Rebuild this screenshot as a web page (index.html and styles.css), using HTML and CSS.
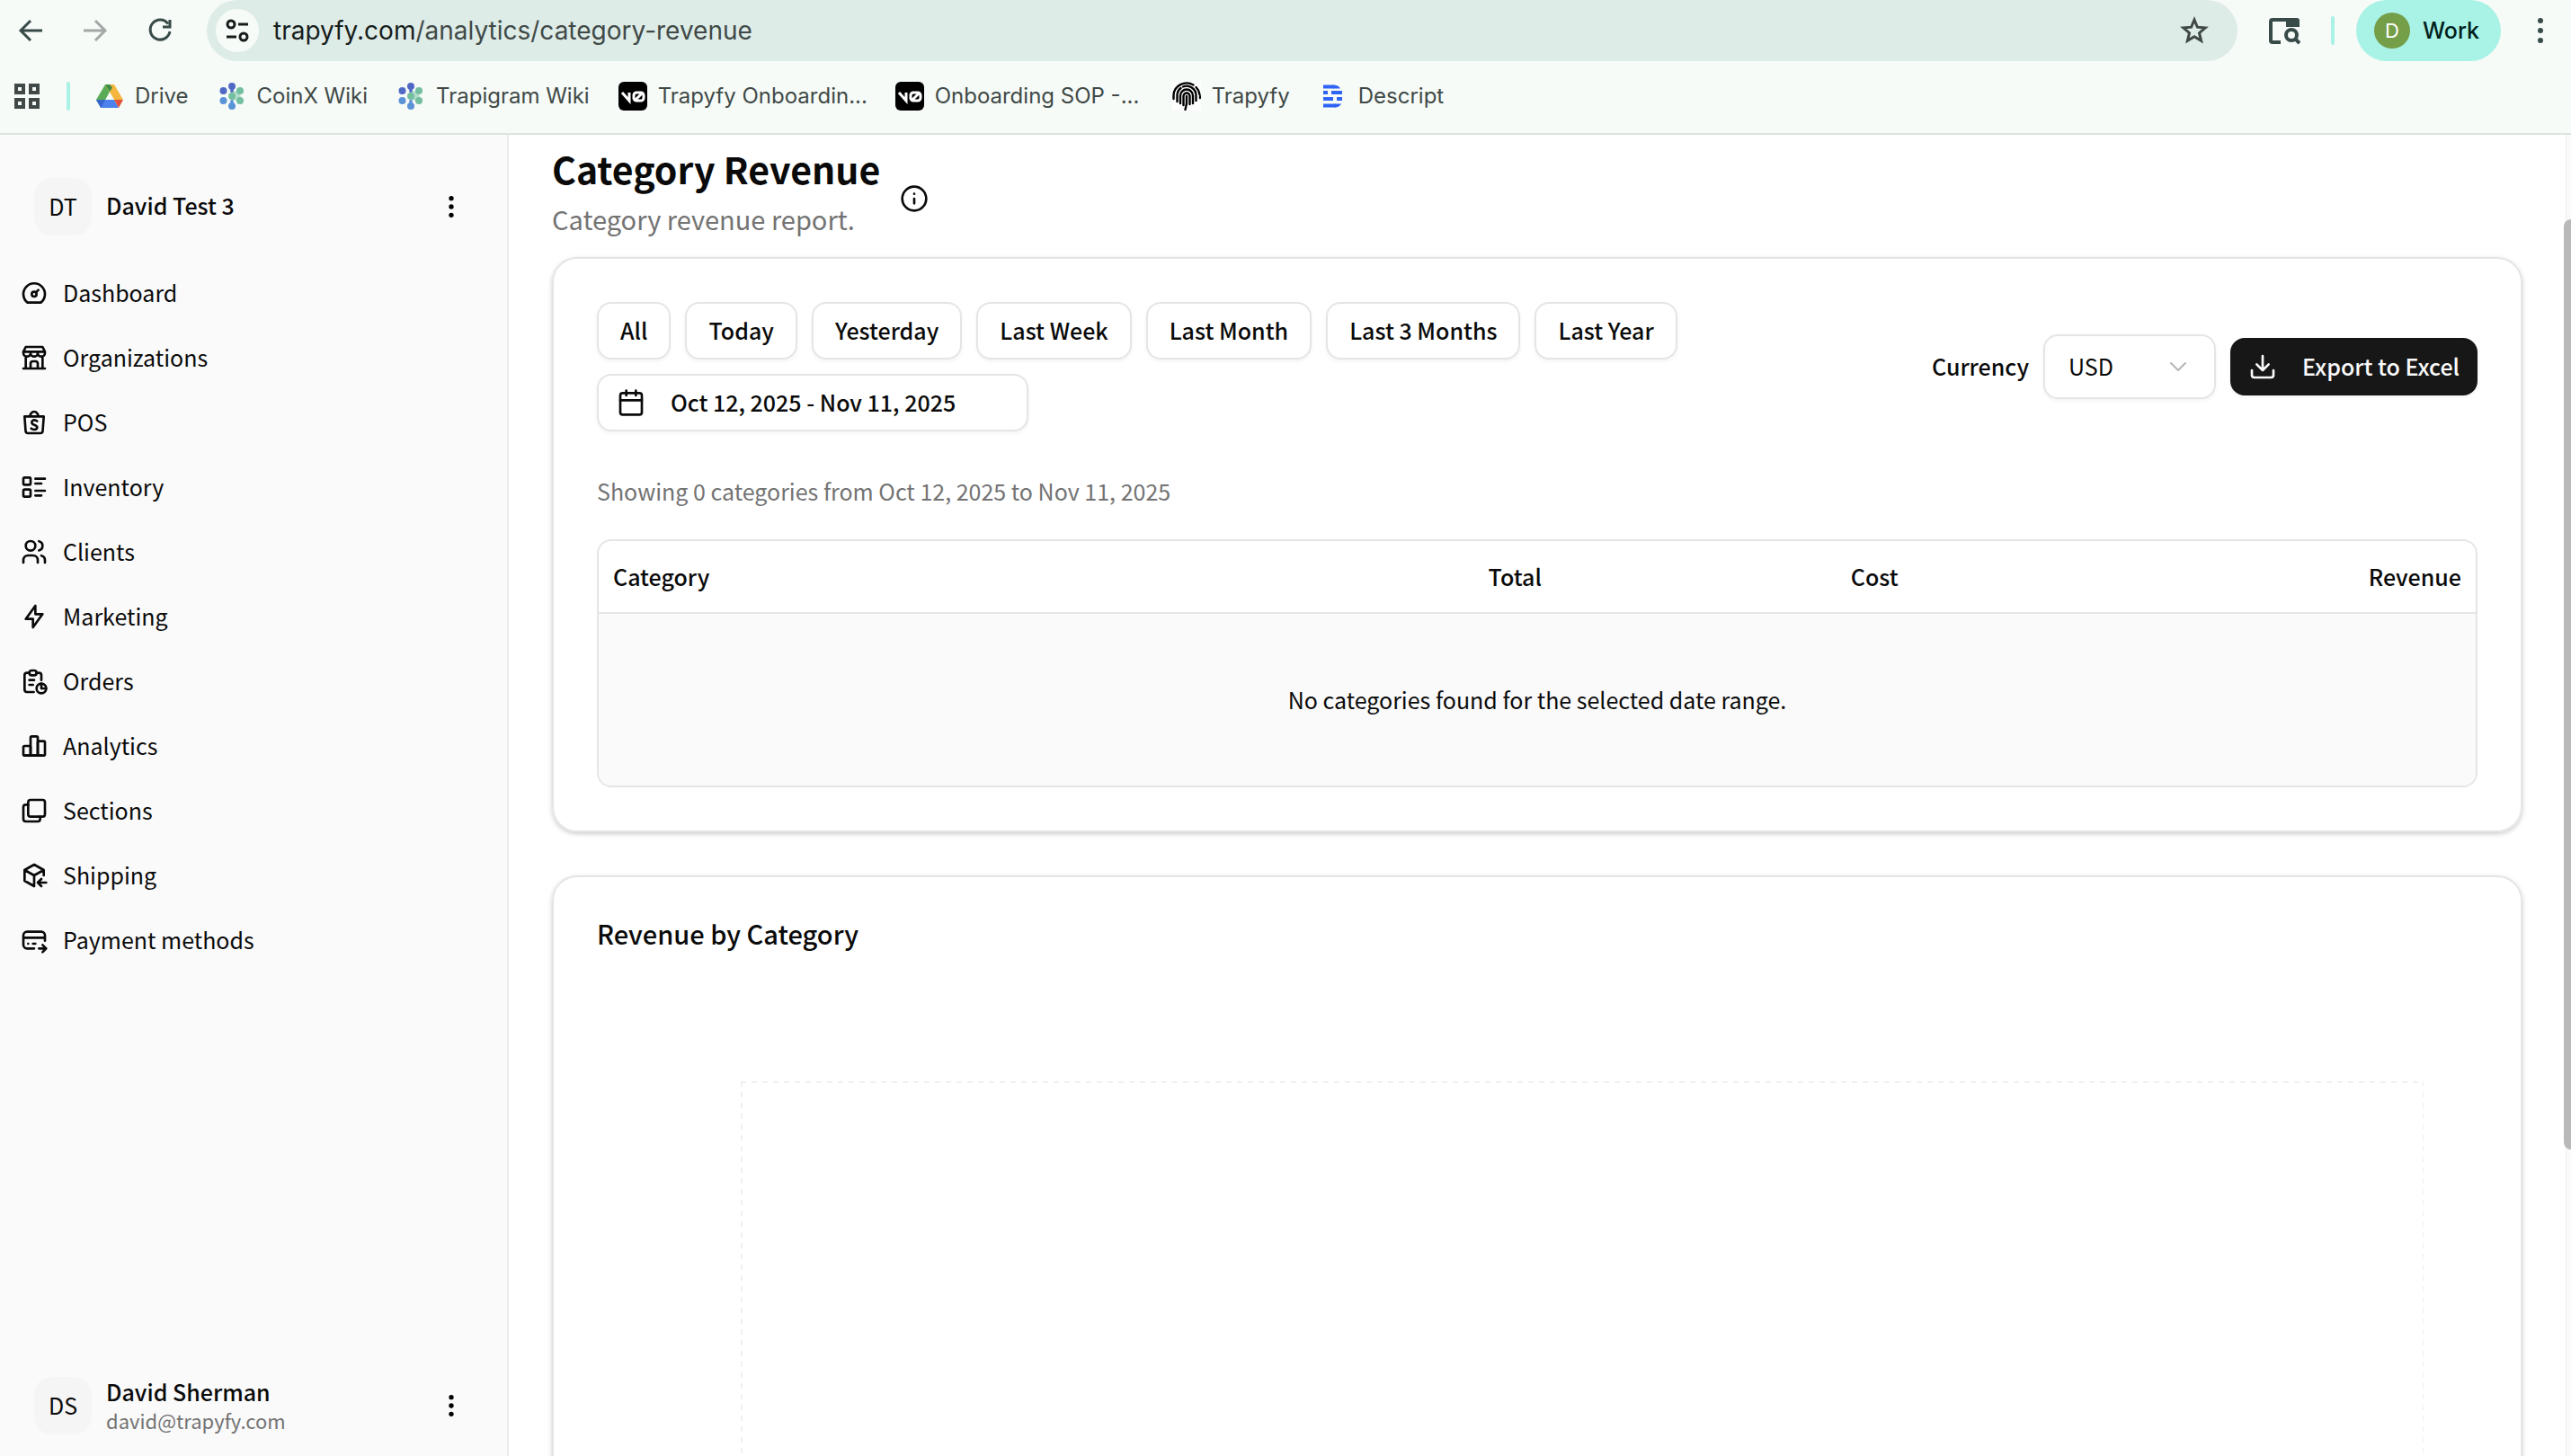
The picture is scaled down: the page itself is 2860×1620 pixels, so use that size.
FILE: index.html
```html
<!DOCTYPE html>
<html lang="en">
<head>
  <meta charset="UTF-8">
  <meta name="viewport" content="width=device-width, initial-scale=1.0">
  <title>Category Revenue</title>
  <link rel="stylesheet" href="styles.css">
</head>
<body>
  <header class="browser">
    <div class="toolbar">
      <button class="tool" aria-label="Back">
        <svg class="tool-icon" viewBox="0 0 32 32"><path d="M29 16H5M16 5L5 16l11 11"/></svg>
      </button>
      <button class="tool tool-off" aria-label="Forward">
        <svg class="tool-icon" viewBox="0 0 32 32"><path d="M3 16h24M16 5l11 11-11 11"/></svg>
      </button>
      <button class="tool" aria-label="Reload">
        <svg class="tool-icon" viewBox="0 0 32 32"><path d="M25 8.500A11 11 0 1 0 27 17M27 4v8h-8"/></svg>
      </button>
      <div class="address">
        <button class="site-info" aria-label="Site information">
          <svg class="site-icon" viewBox="0 0 28 28"><circle cx="7" cy="7" r="4"/><path d="M15 7h11M2 21h11"/><circle cx="21" cy="21" r="4"/></svg>
        </button>
        <span class="url">trapyfy.com<span class="url-path">/analytics/category-revenue</span></span>
        <button class="star" aria-label="Bookmark">
          <svg class="star-icon" viewBox="0 0 32 32"><path d="M16 4l3.400 8.200 8.800.700-6.700 5.800 2.100 8.600L16 22.700l-7.600 4.600 2.100-8.600-6.700-5.800 8.800-.700z"/></svg>
        </button>
      </div>
      <button class="tab-search" aria-label="Search tabs">
        <svg viewBox="0 0 36 32"><path d="M14 29H5a2 2 0 0 1-2-2V6a2 2 0 0 1 2-2h27" fill="none" stroke="#384b49" stroke-width="4"/><path d="M20 2h12a3 3 0 0 1 3 3v7H20z" fill="#384b49"/><circle cx="26" cy="21" r="6" fill="none" stroke="#384b49" stroke-width="4"/><path d="M30 25l5 5" stroke="#384b49" stroke-width="4"/></svg>
      </button>
      <span class="divider"></span>
      <button class="profile"><span class="profile-letter">D</span>Work</button>
      <button class="menu" aria-label="Menu">
        <svg viewBox="0 0 32 32"><circle cx="16" cy="5" r="3"/><circle cx="16" cy="16" r="3"/><circle cx="16" cy="27" r="3"/></svg>
      </button>
    </div>
    <nav class="bookmarks">
      <button class="apps" aria-label="Apps">
        <svg viewBox="0 0 32 32"><path d="M4 4h8v8H4zM20 4h8v8h-8zM4 20h8v8H4zM20 20h8v8h-8z"/></svg>
      </button>
      <span class="divider"></span>
      <a class="bookmark" href="#">
        <svg viewBox="0 0 32 32"><path d="M11 3h10l-5 8z" fill="#2f8a3e"/><path d="M11 3l5 8.500L6.300 29 1 20z" fill="#5bab56"/><path d="M11 3h10l10 17H21z" fill="#f4b63f"/><path d="M11 3h5l3 3.500L16 11z" fill="#3d8c45"/><path d="M1 20h20l5 9H6.300z" fill="#4d82ec"/><path d="M1 20h10L6.300 29z" fill="#3566cf"/><path d="M21 20h10l-5 9z" fill="#e2513c"/><path d="M11.400 20L16 11.500 20.800 20z" fill="#f6fbf7"/></svg>
        <span>Drive</span>
      </a>
      <a class="bookmark" href="#">
        <svg viewBox="0 0 32 32"><g fill="#5069c4"><circle cx="16" cy="5" r="4"/><circle cx="6.500" cy="10" r="4"/><circle cx="16" cy="10" r="2"/></g><g fill="#73bfa0"><circle cx="25" cy="10" r="4"/><circle cx="25" cy="21" r="4"/><circle cx="16" cy="16" r="4"/><path d="M15 12l9-3 3 13-11-2z" opacity=".5"/></g><g fill="#5b93d8"><circle cx="6.500" cy="21" r="4"/><circle cx="16" cy="27" r="4"/><circle cx="16" cy="22" r="2"/></g></svg>
        <span>CoinX Wiki</span>
      </a>
      <a class="bookmark" href="#">
        <svg viewBox="0 0 32 32"><g fill="#5069c4"><circle cx="16" cy="5" r="4"/><circle cx="6.500" cy="10" r="4"/><circle cx="16" cy="10" r="2"/></g><g fill="#73bfa0"><circle cx="25" cy="10" r="4"/><circle cx="25" cy="21" r="4"/><circle cx="16" cy="16" r="4"/><path d="M15 12l9-3 3 13-11-2z" opacity=".5"/></g><g fill="#5b93d8"><circle cx="6.500" cy="21" r="4"/><circle cx="16" cy="27" r="4"/><circle cx="16" cy="22" r="2"/></g></svg>
        <span>Trapigram Wiki</span>
      </a>
      <a class="bookmark bookmark-long" href="#">
        <svg viewBox="0 0 32 32"><rect width="32" height="32" rx="6"/><path d="M4 12l8 9V12M17 19v-4a3 3 0 0 1 3-3h5a3 3 0 0 1 3 3v3a3 3 0 0 1-3 3h-5a3 3 0 0 1-3-3M18 21l9-9" fill="none" stroke="#fff" stroke-width="3"/></svg>
        <span>Trapyfy Onboardin...</span>
      </a>
      <a class="bookmark bookmark-long" href="#">
        <svg viewBox="0 0 32 32"><rect width="32" height="32" rx="6"/><path d="M4 12l8 9V12M17 19v-4a3 3 0 0 1 3-3h5a3 3 0 0 1 3 3v3a3 3 0 0 1-3 3h-5a3 3 0 0 1-3-3M18 21l9-9" fill="none" stroke="#fff" stroke-width="3"/></svg>
        <span>Onboarding SOP -...</span>
      </a>
      <a class="bookmark" href="#">
        <svg viewBox="0 0 32 32"><rect width="32" height="32" fill="#fff"/><g fill="none" stroke="#000" stroke-width="2.400" stroke-linecap="round"><path d="M1.500 19v-4a14.500 14 0 0 1 22-11.500M26.500 6a14 14 0 0 1 4 8M31 16v2M5.500 22v-7a10.500 10.500 0 0 1 4-8M12 5.500a10.500 10.500 0 0 1 14.500 9.500v6M9 24v-8.500a7 7 0 0 1 14 0V24M12.500 26V16a3.500 3.500 0 0 1 7 0v9M16 16v8l-1.500 7"/></g></svg>
        <span>Trapyfy</span>
      </a>
      <a class="bookmark" href="#">
        <svg viewBox="0 0 32 32"><path d="M5 5.500h12M5 12h5M14 12h12M5 19h11M20 19h6M5 26.500h14" fill="none" stroke="#2f63f5" stroke-width="4"/><path d="M16 3.500q6 0 8 4h-8zM18 28.500q5 0 7-4h-7z" fill="#2f63f5"/></svg>
        <span>Descript</span>
      </a>
    </nav>
  </header>

  <div class="page">
    <aside class="sidebar">
      <div class="account">
        <span class="avatar">DT</span>
        <div class="account-text"><strong class="account-name">David Test 3</strong></div>
        <button class="more" aria-label="Organization menu">
          <svg class="dots" viewBox="0 0 24 24"><circle cx="12" cy="5" r="2"/><circle cx="12" cy="12" r="2"/><circle cx="12" cy="19" r="2"/></svg>
        </button>
      </div>
      <nav class="nav">
        <a class="nav-link" href="#"><svg class="icon" viewBox="0 0 24 24"><circle cx="12" cy="13" r="2"/><path d="M13.450 11.550L15.500 9.500M6.400 20a9 9 0 1 1 11.200 0z"/></svg><span>Dashboard</span></a>
        <a class="nav-link" href="#"><svg class="icon" viewBox="0 0 24 24"><path d="M3 21h18M3 7v1a3 3 0 0 0 6 0V7m0 1a3 3 0 0 0 6 0V7m0 1a3 3 0 0 0 6 0V7H3l2-4h14l2 4M5 21V10.850M19 21V10.850M9 21v-4a2 2 0 0 1 2-2h2a2 2 0 0 1 2 2v4"/></svg><span>Organizations</span></a>
        <a class="nav-link" href="#"><svg class="icon" viewBox="0 0 24 24"><path d="M4 7l.867 12.143a2 2 0 0 0 2 1.857h10.276a2 2 0 0 0 2-1.857L20.010 7zM8.500 7c0-1.653 1.500-4 3.500-4s3.500 2.347 3.500 4M9.500 17c.413.462 1 1 2.500 1s2.500-.897 2.500-2-1-1.500-2.500-2-2-1.470-2-2c0-1.104 1-2 2-2s1.500 0 2.500 1"/></svg><span>POS</span></a>
        <a class="nav-link" href="#"><svg class="icon" viewBox="0 0 24 24"><path d="M13 5h8M13 9h5M13 15h8M13 19h5"/><rect x="3" y="4" width="6" height="6" rx="1"/><rect x="3" y="14" width="6" height="6" rx="1"/></svg><span>Inventory</span></a>
        <a class="nav-link" href="#"><svg class="icon" viewBox="0 0 24 24"><circle cx="9" cy="7" r="4"/><path d="M3 21v-2a4 4 0 0 1 4-4h4a4 4 0 0 1 4 4v2M16 3.130a4 4 0 0 1 0 7.750M21 21v-2a4 4 0 0 0-3-3.850"/></svg><span>Clients</span></a>
        <a class="nav-link" href="#"><svg class="icon" viewBox="0 0 24 24"><path d="M13 3v7h6l-8 11v-7H5z"/></svg><span>Marketing</span></a>
        <a class="nav-link" href="#"><svg class="icon" viewBox="0 0 24 24"><path d="M8 5H6a2 2 0 0 0-2 2v12a2 2 0 0 0 2 2h5.697M18 14v4h4M18 11V7a2 2 0 0 0-2-2h-2M8 11h4M8 15h3"/><rect x="8" y="3" width="6" height="4" rx="2"/><circle cx="18" cy="18" r="4"/></svg><span>Orders</span></a>
        <a class="nav-link" href="#"><svg class="icon" viewBox="0 0 24 24"><rect x="3" y="12" width="6" height="8" rx="1"/><rect x="9" y="4" width="6" height="16" rx="1"/><rect x="15" y="8" width="6" height="12" rx="1"/><path d="M4 20h14"/></svg><span>Analytics</span></a>
        <a class="nav-link" href="#"><svg class="icon" viewBox="0 0 24 24"><rect x="7" y="3" width="14" height="14" rx="2"/><path d="M17 17v2a2 2 0 0 1-2 2H5a2 2 0 0 1-2-2V9a2 2 0 0 1 2-2h2"/></svg><span>Sections</span></a>
        <a class="nav-link" href="#"><svg class="icon" viewBox="0 0 24 24"><path d="M12 21l-8-4.500v-9L12 3l8 4.500V12M12 12l8-4.500M12 12v9M12 12L4 7.500M22 18h-7M18 15l-3 3 3 3"/></svg><span>Shipping</span></a>
        <a class="nav-link" href="#"><svg class="icon" viewBox="0 0 24 24"><path d="M12 19H6a3 3 0 0 1-3-3V8a3 3 0 0 1 3-3h12a3 3 0 0 1 3 3v4.500M3 10h18M16 19h6M19 16l3 3-3 3M7 15h.010M11 15h2"/></svg><span>Payment methods</span></a>
      </nav>
      <div class="account">
        <span class="avatar">DS</span>
        <div class="account-text">
          <strong class="account-name">David Sherman</strong>
          <span class="account-email">david@trapyfy.com</span>
        </div>
        <button class="more" aria-label="User menu">
          <svg class="dots" viewBox="0 0 24 24"><circle cx="12" cy="5" r="2"/><circle cx="12" cy="12" r="2"/><circle cx="12" cy="19" r="2"/></svg>
        </button>
      </div>
    </aside>

    <main class="main">
      <div class="heading">
        <div class="heading-text">
          <h1 class="title">Category Revenue</h1>
          <p class="subtitle">Category revenue report.</p>
        </div>
        <button class="info" aria-label="About this report">
          <svg class="icon" viewBox="0 0 24 24"><circle cx="12" cy="12" r="10"/><path d="M12 16v-4M12 8h.010"/></svg>
        </button>
      </div>

      <section class="card">
        <div class="filters">
          <div class="ranges">
            <button class="btn"><span>All</span></button>
            <button class="btn"><span>Today</span></button>
            <button class="btn"><span>Yesterday</span></button>
            <button class="btn"><span>Last Week</span></button>
            <button class="btn"><span>Last Month</span></button>
            <button class="btn"><span>Last 3 Months</span></button>
            <button class="btn"><span>Last Year</span></button>
            <button class="btn btn-date">
              <svg class="icon" viewBox="0 0 24 24"><path d="M8 2v4M16 2v4M3 10h18"/><rect x="3" y="4" width="18" height="18" rx="2"/></svg>
              <span>Oct 12, 2025 - Nov 11, 2025</span>
            </button>
          </div>
          <div class="actions">
            <label class="label" for="currency">Currency</label>
            <div class="select-box">
              <select class="select" id="currency">
                <option>USD</option>
              </select>
              <svg class="icon chevron" viewBox="0 0 24 24"><path d="M4 8l8 8 8-8"/></svg>
            </div>
            <button class="btn btn-export">
              <svg class="icon" viewBox="0 0 24 24"><path d="M21 15v4a2 2 0 0 1-2 2H5a2 2 0 0 1-2-2v-4M7 10l5 5 5-5M12 15V3"/></svg>
              <span>Export to Excel</span>
            </button>
          </div>
        </div>
        <p class="summary">Showing 0 categories from Oct 12, 2025 to Nov 11, 2025</p>
        <div class="table-box">
          <table class="table">
            <thead>
              <tr>
                <th class="col-category">Category</th>
                <th class="col-total">Total</th>
                <th class="col-cost">Cost</th>
                <th class="col-revenue">Revenue</th>
              </tr>
            </thead>
            <tbody>
              <tr>
                <td class="empty" colspan="4">No categories found for the selected date range.</td>
              </tr>
            </tbody>
          </table>
        </div>
      </section>

      <section class="card">
        <h2 class="card-title">Revenue by Category</h2>
        <div class="chart">
          <svg class="grid" width="100%" height="600">
            <line x1="0" y1="1" x2="100%" y2="1"/>
            <line x1="1" y1="0" x2="1" y2="600"/>
            <line class="grid-end" x1="100%" y1="0" x2="100%" y2="600"/>
          </svg>
        </div>
      </section>
      <div class="scrollbar"><div class="thumb"></div></div>
    </main>
  </div>
</body>
</html>
```
FILE: styles.css
```css
* {
  box-sizing: border-box;
}
body {
  margin: 0;
  height: 100vh;
  display: flex;
  flex-direction: column;
  overflow: hidden;
  font-family: "Noto Sans CJK SC", "Open Sans", sans-serif;
  font-size: 25px;
  line-height: 40px;
  color: #0a0a0a;
  background-color: #fff;
}
button, select {
  font: inherit;
  color: inherit;
  background: none;
  border: 0;
  padding: 0;
  margin: 0;
}
a {
  color: inherit;
  text-decoration: none;
}
h1, h2, p {
  margin: 0;
}
svg {
  display: block;
  flex-shrink: 0;
}

/* browser bar */
.browser {
  flex-shrink: 0;
  height: 150px;
  background-color: #f6fbf7;
  border-bottom: 2px solid #dbe4e1;
  font-family: Inter, "Liberation Sans", sans-serif;
  color: #404947;
}
.toolbar {
  display: flex;
  align-items: center;
  height: 68px;
  padding: 0 18px;
}
.tool {
  width: 32px;
  margin-right: 40px;
}
.tool-off + .tool {
  margin-right: 36px;
}
.tool-icon, .site-icon, .star-icon {
  fill: none;
  stroke: #384b49;
  stroke-width: 3;
}
.tool-off .tool-icon {
  stroke: #a3a8a6;
}
.address {
  flex: 1;
  display: flex;
  align-items: center;
  height: 68px;
  margin-right: 34px;
  padding: 0 32px 0 10px;
  border-radius: 34px;
  background-color: #deece8;
  font-size: 28px;
}
.site-info {
  width: 48px;
  height: 48px;
  padding: 10px;
  margin-right: 16px;
  border-radius: 50%;
  background-color: #f6fbf7;
}
.site-icon {
  stroke: #171d1c;
}
.url {
  flex: 1;
  color: #171d1c;
}
.url-path {
  color: #404947;
}
.star {
  width: 32px;
}
.star-icon {
  stroke: #404947;
}
.tab-search {
  width: 36px;
}
.divider {
  width: 4px;
  height: 32px;
  border-radius: 2px;
  background-color: #a8f2e6;
}
.toolbar .divider {
  margin: 0 24px 0 34px;
}
.profile {
  display: flex;
  align-items: center;
  gap: 14px;
  height: 68px;
  padding: 0 24px 0 20px;
  border-radius: 34px;
  background-color: #a8f2e6;
  color: #00201c;
  font-size: 25px;
  font-weight: 500;
}
.profile-letter {
  width: 40px;
  border-radius: 50%;
  background-color: #759e48;
  color: #fff;
  font-size: 22px;
  font-weight: 400;
}
.menu {
  width: 32px;
  margin-left: 28px;
  fill: #384b49;
}
.bookmarks {
  display: flex;
  align-items: center;
  height: 78px;
  padding-left: 14px;
  font-size: 24px;
}
.apps {
  width: 32px;
  margin-right: 28px;
}
.apps svg {
  fill: none;
  stroke: #404947;
  stroke-width: 4;
}
.bookmark {
  display: flex;
  align-items: center;
  gap: 12px;
  margin-right: 32px;
}
.bookmarks .divider {
  margin-right: 28px;
}
.bookmark svg {
  width: 32px;
}
.bookmark-long span {
  width: 232px;
  white-space: nowrap;
}

/* sidebar */
.page {
  flex: 1;
  min-height: 0;
  display: flex;
}
.sidebar {
  flex-shrink: 0;
  display: flex;
  flex-direction: column;
  width: 566px;
  padding: 48px 0 22px;
  background-color: #fafafa;
  border-right: 2px solid #ebebeb;
}
.account {
  display: flex;
  align-items: center;
  gap: 16px;
  padding: 0 46px 0 38px;
}
.avatar {
  width: 64px;
  height: 64px;
  line-height: 62px;
  border-radius: 20px;
  background-color: #f5f5f5;
  text-align: center;
}
.account-text {
  flex: 1;
  display: flex;
  flex-direction: column;
  padding-bottom: 4px;
}
.account-name {
  font-weight: 500;
  line-height: 36px;
}
.account-email {
  font-size: 22px;
  line-height: 28px;
  color: #737373;
}
.icon {
  width: 32px;
  height: 32px;
  fill: none;
  stroke: currentColor;
  stroke-width: 2;
  stroke-linecap: round;
  stroke-linejoin: round;
}
.dots {
  width: 32px;
}
.nav {
  flex: 1;
  padding-top: 28px;
}
.nav-link {
  display: flex;
  align-items: center;
  gap: 16px;
  height: 72px;
  padding-left: 22px;
}
.nav-link span, .btn span, .label {
  padding-bottom: 2px;
}

/* report */
.main {
  position: relative;
  flex: 1;
  min-width: 0;
  padding: 12px 54px 0 48px;
  overflow: hidden;
}
.heading {
  display: flex;
  align-items: center;
  gap: 22px;
  padding-bottom: 6px;
}
.heading-text {
  padding-bottom: 6px;
}
.title {
  font-size: 41px;
  line-height: 50px;
  font-weight: 700;
}
.subtitle {
  font-size: 29px;
  line-height: 62px;
  color: #737373;
}
.card {
  margin-bottom: 48px;
  padding: 48px;
  border: 2px solid #e5e5e5;
  border-radius: 28px;
  box-shadow: 0 2px 6px rgba(0, 0, 0, 0.1), 0 2px 4px rgba(0, 0, 0, 0.1);
}
.filters {
  display: flex;
  align-items: center;
  justify-content: space-between;
}
.ranges {
  display: flex;
  flex-wrap: wrap;
  gap: 16px;
  width: 60%;
}
.btn {
  display: flex;
  align-items: center;
  height: 64px;
  padding: 0 24px;
  border: 2px solid #e5e5e5;
  border-radius: 16px;
  box-shadow: 0 2px 4px rgba(0, 0, 0, 0.05);
  font-weight: 500;
}
.btn-date {
  gap: 28px;
  width: 480px;
  padding: 0 20px;
}
.btn-export {
  gap: 28px;
  padding: 0 18px;
  border-color: #171717;
  background-color: #171717;
  color: #fafafa;
}
.actions {
  display: flex;
  align-items: center;
  gap: 16px;
}
.label {
  font-weight: 500;
}
.select-box {
  position: relative;
}
.select {
  display: block;
  appearance: none;
  width: 192px;
  height: 72px;
  padding: 0 26px 2px;
  border: 2px solid #e5e5e5;
  border-radius: 16px;
  box-shadow: 0 2px 4px rgba(0, 0, 0, 0.05);
}
.chevron {
  position: absolute;
  top: 24px;
  right: 30px;
  width: 24px;
  height: 24px;
  color: #b5b5b5;
  pointer-events: none;
}
.summary {
  margin: 46px 0 34px;
  color: #737373;
}
.table-box {
  border: 2px solid #e5e5e5;
  border-radius: 16px;
  overflow: hidden;
}
.table {
  width: 100%;
  table-layout: fixed;
  border-collapse: collapse;
}
.table th {
  height: 80px;
  padding: 0 16px 2px;
  font-weight: 500;
  text-align: right;
  border-bottom: 2px solid #e5e5e5;
}
.table .col-category {
  width: 33%;
  text-align: left;
}
.col-total {
  width: 18%;
}
.col-cost {
  width: 19%;
}
.empty {
  height: 192px;
  padding: 0 16px 2px;
  text-align: center;
  background-color: #fafafa;
}
.card-title {
  font-size: 29px;
  line-height: 28px;
  font-weight: 500;
}
.chart {
  padding: 151px 60px 0 160px;
}
.grid line {
  stroke: #f0f0f0;
  stroke-width: 2;
  stroke-dasharray: 6 6;
}
.scrollbar {
  position: absolute;
  top: 0;
  right: 0;
  bottom: 0;
  width: 6px;
  background-color: #fafafa;
  border-left: 1px solid #ececec;
}
.thumb {
  position: absolute;
  top: 94px;
  right: 0;
  width: 8px;
  height: 1035px;
  border-radius: 8px 0 0 8px;
  background-color: #b9b9b9;
}
```
